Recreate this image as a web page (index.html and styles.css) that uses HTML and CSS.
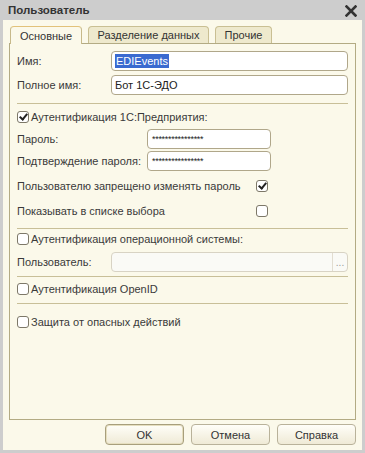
FILE: index.html
```html
<!DOCTYPE html>
<html lang="ru">
<head>
    <meta charset="UTF-8">
    <title>Пользователь</title>
    <link rel="stylesheet" href="styles.css">
</head>
<body>
    <div class="window">
        <div class="titlebar">
            <span class="title">Пользователь</span>
            <svg class="close" width="12" height="12" viewBox="0 0 12 12">
                <path d="M1.5 1.5 L10.5 10.5 M10.5 1.5 L1.5 10.5" stroke="#333" stroke-width="2.6" stroke-linecap="square"/>
            </svg>
        </div>

        <div class="client">
            <div class="tabs">
                <div class="tab active">Основные</div>
                <div class="tab tab-data">Разделение данных</div>
                <div class="tab tab-other">Прочие</div>
            </div>

            <div class="panel">
                <div class="row r-name">
                    <span class="label w-short">Имя:</span>
                    <div class="input wide"><span class="selected">EDIEvents</span></div>
                </div>
                <div class="row r-fullname">
                    <span class="label w-short">Полное имя:</span>
                    <div class="input wide">Бот 1С-ЭДО</div>
                </div>

                <div class="sep s-1"></div>

                <div class="row check-row r-auth">
                    <span class="box checked"></span>
                    <span>Аутентификация 1С:Предприятия:</span>
                </div>
                <div class="row r-pass">
                    <span class="label w-long">Пароль:</span>
                    <div class="input pass">****************</div>
                </div>
                <div class="row r-confirm">
                    <span class="label w-long">Подтверждение пароля:</span>
                    <div class="input pass">****************</div>
                </div>
                <div class="row r-deny">
                    <span class="label w-flag">Пользователю запрещено изменять пароль</span>
                    <span class="box checked"></span>
                </div>
                <div class="row r-show">
                    <span class="label w-flag">Показывать в списке выбора</span>
                    <span class="box"></span>
                </div>

                <div class="sep s-2"></div>

                <div class="row check-row r-os">
                    <span class="box"></span>
                    <span>Аутентификация операционной системы:</span>
                </div>
                <div class="row r-osuser">
                    <span class="label w-short">Пользователь:</span>
                    <div class="input wide disabled">
                        <span class="dots">...</span>
                    </div>
                </div>

                <div class="sep s-3"></div>

                <div class="row check-row r-openid">
                    <span class="box"></span>
                    <span>Аутентификация OpenID</span>
                </div>

                <div class="sep s-4"></div>

                <div class="row check-row r-protect">
                    <span class="box"></span>
                    <span>Защита от опасных действий</span>
                </div>
            </div>

            <div class="buttons">
                <button class="btn default">OK</button>
                <button class="btn">Отмена</button>
                <button class="btn">Справка</button>
            </div>
        </div>
    </div>
</body>
</html>
```

FILE: styles.css
```css
:root {
    --cream: #fbf9ea;
    --frame: #cdcdcd;
    --olive: #b3ab84;
    --line: #c8bf98;
    --text: #3a3a3a;
    --field-border: #b0a78a;
}

* {
    margin: 0;
    padding: 0;
    box-sizing: border-box;
}

body {
    font-family: "Liberation Sans", Arial, sans-serif;
    font-size: 11px;
    color: var(--text);
    background: var(--frame);
    white-space: nowrap;
}

.window {
    width: 365px;
    height: 453px;
    background: var(--frame);
    padding: 0 3px 3px;
    display: flex;
    flex-direction: column;
}

.titlebar {
    height: 20px;
    display: flex;
    align-items: center;
    justify-content: space-between;
    padding: 0 5px 1px 5px;
}

.title {
    font-weight: bold;
    font-size: 11.5px;
    color: #333;
}

.close {
    margin-top: 3px;
}

.client {
    flex: 1;
    background: var(--cream);
    padding: 6px 6px 0 6px;
    display: flex;
    flex-direction: column;
}

/* tabs */
.tabs {
    display: flex;
    height: 17px;
    padding-left: 1px;
    position: relative;
    z-index: 1;
}

.tab {
    height: 17px;
    border: 1px solid #c9bf93;
    border-bottom: none;
    border-radius: 4px 4px 0 0;
    background: #eee9cd;
    display: flex;
    align-items: center;
    justify-content: center;
    margin-right: 6px;
    color: #333;
}

.tab.active {
    width: 72px;
    height: 18px;
    background: var(--cream);
    border-color: #c7b98a;
    border-top: 1px solid #e2c27a;
}

.tab-data {
    width: 121px;
}

.tab-other {
    width: 57px;
}

.panel {
    height: 377px;
    border: 1px solid var(--olive);
    padding: 7px 7px 0 7px;
    display: flex;
    flex-direction: column;
}

/* rows */
.row {
    display: flex;
    align-items: center;
    height: 20px;
    flex-shrink: 0;
}

.check-row {
    height: 16px;
}

.label {
    flex-shrink: 0;
}

.w-short { width: 94px; }
.w-long { width: 130px; }
.w-flag { width: 239px; }

.input {
    height: 20px;
    border: 1px solid var(--field-border);
    border-radius: 4px;
    background: #fff;
    padding: 0 0 0 3px;
    display: flex;
    align-items: center;
    color: #222;
}

.input.wide { width: 237px; }
.input.pass {
    width: 124px;
    font-size: 9px;
    letter-spacing: -0.3px;
    padding-left: 4px;
}

.input.disabled {
    background: #fafaf6;
    border-color: #d8d3c4;
    justify-content: flex-end;
    padding: 0;
}

.dots {
    width: 15px;
    height: 18px;
    border-left: 1px solid #e2ddd0;
    color: #9a9a9a;
    font-size: 10px;
    display: flex;
    align-items: center;
    justify-content: center;
}

.selected {
    background: #3a6ad0;
    color: #fff;
    padding: 0 1px;
    line-height: 14px;
}

.box {
    width: 12px;
    height: 12px;
    border: 1px solid #7d7868;
    border-radius: 3px;
    background: #fff;
    flex-shrink: 0;
    position: relative;
}

.check-row .box {
    margin-right: 2px;
}

.box.checked::after {
    content: "";
    position: absolute;
    left: 3px;
    top: 0px;
    width: 3px;
    height: 6px;
    border-right: 2px solid #222;
    border-bottom: 2px solid #222;
    transform: rotate(40deg);
}

.sep {
    height: 1px;
    background: var(--line);
    flex-shrink: 0;
}

/* vertical rhythm */
.r-fullname { margin-top: 4px; }
.s-1 { margin-top: 8px; }
.r-auth { margin-top: 5px; }
.r-pass { margin-top: 4px; }
.r-confirm { margin-top: 2px; }
.r-deny { margin-top: 5px; }
.r-show { margin-top: 5px; }
.s-2 { margin-top: 7px; }
.r-os { margin-top: 2px; }
.r-osuser { margin-top: 5px; }
.s-3 { margin-top: 4px; }
.r-openid { margin-top: 4px; }
.s-4 { margin-top: 6px; }
.r-protect { margin-top: 10px; }

/* buttons */
.buttons {
    display: flex;
    justify-content: flex-end;
    gap: 7px;
    margin-top: 4px;
}

.btn {
    width: 79px;
    height: 21px;
    font-family: "Liberation Sans", Arial, sans-serif;
    font-size: 11px;
    color: #333;
    border: 1px solid #b9b29a;
    border-radius: 4px;
    background: linear-gradient(#fffef8, #efead6);
}

.btn.default {
    border-color: #a89f7c;
    box-shadow: inset 0 0 0 1px #e6dfbf;
}
```
